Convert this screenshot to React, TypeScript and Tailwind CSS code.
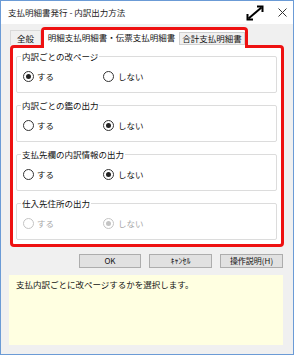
import React from "react";

const font = { fontFamily: '"Noto Sans CJK JP", "Noto Sans", sans-serif' };

function Radio({ checked, disabled }: { checked?: boolean; disabled?: boolean }) {
  return (
    <span
      className={`flex h-[11px] w-[11px] items-center justify-center rounded-full border bg-white ${
        disabled ? "border-[#c4c4c4]" : "border-[#333333]"
      }`}
    >
      {checked && (
        <span className={`h-[5px] w-[5px] rounded-full ${disabled ? "bg-[#c4c4c4]" : "bg-[#222222]"}`} />
      )}
    </span>
  );
}

function Group({ label, selected, disabled }: { label: string; selected: 0 | 1; disabled?: boolean }) {
  return (
    <div className="relative h-[37px] rounded-[2px] border border-[#dcdcdc] bg-white">
      <span className="absolute left-[4px] top-[-7px] bg-white px-[1px] text-[8.5px] leading-[12px] text-[#111]">
        {label}
      </span>
      <div className={`flex h-full items-center pl-[6px] pt-[3px] text-[8.5px] ${disabled ? "text-[#a8a8a8]" : "text-[#111]"}`}>
        <div className="flex w-[80px] items-center gap-[3px]">
          <Radio checked={selected === 0} disabled={disabled} />
          <span>する</span>
        </div>
        <div className="flex items-center gap-[4px]">
          <Radio checked={selected === 1} disabled={disabled} />
          <span>しない</span>
        </div>
      </div>
    </div>
  );
}

export default function App() {
  return (
    <div style={font} className="flex h-[355px] w-[294px] flex-col border border-[#6b9bd6] bg-[#f0f0f0] text-[#111]">
      {/* title bar */}
      <div className="flex h-[23px] shrink-0 items-center bg-white pl-[7px] pr-[6px]">
        <span className="text-[8.5px] text-[#222]">支払明細書発行 - 内訳出力方法</span>
        <div className="ml-auto flex items-center gap-[14px]">
          <svg width="18" height="16" viewBox="0 0 18 16">
            <path d="M2.5 13.5 L15.5 2.5" stroke="#000" strokeWidth="2" />
            <path d="M1.5 9 L1.5 14.5 L7 14.5" fill="none" stroke="#000" strokeWidth="2" />
            <path d="M11 1.5 L16.5 1.5 L16.5 7" fill="none" stroke="#000" strokeWidth="2" />
          </svg>
          <svg width="9" height="9" viewBox="0 0 9 9">
            <path d="M0.5 0.5 L8.5 8.5 M8.5 0.5 L0.5 8.5" stroke="#333" strokeWidth="1" />
          </svg>
        </div>
      </div>

      {/* tabs */}
      <div className="mt-[3px] flex h-[18px] shrink-0 items-end pl-[9px]">
        <div className="flex h-[15px] w-[31px] items-center justify-center border border-b-0 border-[#d9d9d9] bg-[#f0f0f0] text-[8.5px]">
          全般
        </div>
        <div className="relative z-10 mb-[-3px] flex h-[21px] items-start rounded-t-[4px] border-[3px] border-b-0 border-[#ee1111] bg-white">
          <div className="flex h-[15px] w-[135px] items-center justify-center bg-white text-[8.5px]">
            明細支払明細書・伝票支払明細書
          </div>
          <div className="mt-[2px] flex h-[13px] w-[66px] items-center justify-center border border-[#d0d0d0] bg-[#f0f0f0] text-[8.5px]">
            合計支払明細書
          </div>
        </div>
      </div>

      {/* panel */}
      <div className="ml-[9px] flex h-[202px] w-[274px] shrink-0 flex-col gap-[12px] rounded-[4px] border-[3px] border-[#ee1111] bg-white pb-[4px] pl-[3px] pr-[4px] pt-[8px]">
        <Group label="内訳ごとの改ページ" selected={0} />
        <Group label="内訳ごとの鑑の出力" selected={1} />
        <Group label="支払先欄の内訳情報の出力" selected={1} />
        <Group label="仕入先住所の出力" selected={1} disabled />
      </div>

      {/* buttons */}
      <div className="mt-[7px] flex shrink-0 justify-end gap-[8px] pr-[10px]">
        <button className="h-[14px] w-[62px] border border-[#adadad] bg-[#e1e1e1] text-[8px] leading-none">OK</button>
        <button className="h-[14px] w-[63px] border border-[#adadad] bg-[#e1e1e1] text-[8px] leading-none">ｷｬﾝｾﾙ</button>
        <button className="h-[14px] w-[63px] border border-[#adadad] bg-[#e1e1e1] text-[8px] leading-none">操作説明(H)</button>
      </div>

      {/* info */}
      <div className="ml-[8px] mt-[7px] h-[70px] w-[274px] shrink-0 bg-[#ffffe1] px-[7px] pt-[3px] text-[8.5px] text-[#111]">
        支払内訳ごとに改ページするかを選択します。
      </div>
    </div>
  );
}
